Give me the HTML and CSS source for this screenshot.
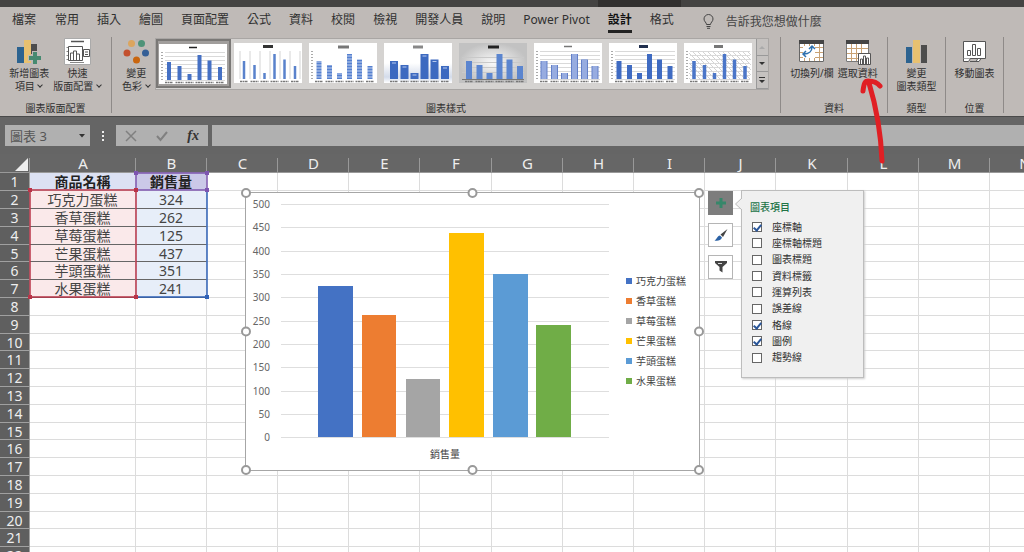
FILE: index.html
```html
<!DOCTYPE html>
<html lang="zh-Hant">
<head>
<meta charset="utf-8">
<title>圖表 3</title>
<link rel="stylesheet" href="styles.css">
</head>
<body>
<svg class="defs" aria-hidden="true">
  <defs>
    <linearGradient id="fade" x1="0" y1="0" x2="0" y2="1"><stop offset="0.5" stop-color="#fff"/><stop offset="0.85" stop-color="#d3dbea"/><stop offset="1" stop-color="#fff"/></linearGradient>
    <radialGradient id="vignette"><stop offset="0" stop-color="#fafafa"/><stop offset="1" stop-color="#c2c2c2"/></radialGradient>
    <pattern id="hatch" width="5" height="5" patternUnits="userSpaceOnUse"><path d="M0 0L5 5" stroke="#d4d4d4"/></pattern>
    <symbol id="bars" viewBox="0 0 68 40"><path fill="none" d="M10 18V36M20.500 22V36M30.500 30V36M40.500 11V36M50.500 16.500V36M61 23V36"/></symbol>
    <symbol id="grid" viewBox="0 0 68 40"><path d="M6 8.500H66M6 12.500H66M6 16.500H66M6 20.500H66M6 24.500H66M6 28.500H66M6 32.500H66M6 36.500H66" stroke="#d9d9d9"/><path d="M3 8V37" stroke="#aaa" stroke-width="2" stroke-dasharray="1 2"/></symbol>
    <symbol id="labels" viewBox="0 0 68 40"><path d="M6 38.500h8M16.500 38.500h8M26.500 38.500h8M36.500 38.500h8M46.500 38.500h8M57 38.500h8" stroke="#777" stroke-width="1.500" stroke-dasharray="2 .5"/></symbol>
  </defs>
</svg>

<header class="titlebar"><div class="tool-tab"></div></header>

<nav class="tabs">
  <button class="tab">檔案</button><button class="tab">常用</button><button class="tab">插入</button><button class="tab">繪圖</button><button class="tab">頁面配置</button><button class="tab">公式</button><button class="tab">資料</button><button class="tab">校閱</button><button class="tab">檢視</button><button class="tab">開發人員</button><button class="tab">說明</button><button class="tab">Power Pivot</button><button class="tab active">設計</button><button class="tab">格式</button>
  <button class="tell-me">
    <svg width="11" height="15" viewBox="0 0 11 15" fill="none" stroke="#444"><path d="M3.500 10.500C3.500 8.500 1 7.500 1 5A4.500 4.500 0 0 1 10 5C10 7.500 7.500 8.500 7.500 10.500ZM3.500 12.500H7.500M4 14.300H7"/></svg>
    告訴我您想做什麼
  </button>
</nav>

<section class="ribbon">
  <div class="group layouts">
    <div class="tools">
      <button class="tool">
        <svg width="26" height="27" viewBox="0 0 26 27"><path fill="#2c6390" d="M1 9h7v16H1z"/><path fill="#4d4d4d" d="M15 6h6v10h-6z"/><path fill="#e8c170" d="M8 2h7v23H8z"/><path fill="#bfbab7" d="M16 13h6v4h4v6h-4v4h-6v-4h-4v-6h4z"/><path fill="#468a70" d="M17 14h4v4h4v4h-4v4h-4v-4h-4v-4h4z"/></svg>
        <span>新增圖表<br>項目 <i class="chev"></i></span>
      </button>
      <button class="tool">
        <svg width="27" height="27" viewBox="0 0 27 27"><path fill="#fff" stroke="#aaa" d="M.5.500h26v26H.5z"/><path stroke="#555" stroke-width="1.500" d="M7 3.500h13"/><path stroke="#888" d="M2.500 9.500h2M2.500 13.500h2M2.500 17.500h2M2.500 21.500h2M6 24.500h14"/><path fill="none" stroke="#555" d="M4.500 8.500h14v14h-14zM19.500 11.500h6v7h-6zM21 14h3M21 16.500h3M6.500 22v-7h3v7M9.500 22v-9h3v9M12.500 22v-6h3v6"/></svg>
        <span>快速<br>版面配置 <i class="chev"></i></span>
      </button>
    </div>
    <h2>圖表版面配置</h2>
  </div>

  <div class="group styles">
    <div class="tools">
      <button class="tool">
        <svg width="27" height="27" viewBox="0 0 27 27"><circle cx="8.500" cy="5.500" r="3.500" fill="#dca55e"/><circle cx="18.500" cy="5.500" r="3.500" fill="#4e9379"/><circle cx="4" cy="15" r="3.500" fill="#c3502e"/><circle cx="22.500" cy="15" r="3.500" fill="#355f96"/><circle cx="13.500" cy="22" r="3.500" fill="#c9660f"/></svg>
        <span>變更<br>色彩 <i class="chev"></i></span>
      </button>
      <div class="gallery">
        <button class="thumb selected" aria-label="樣式 1"><svg viewBox="0 0 68 40"><use href="#grid"/><path d="M30 3.500h8" stroke="#222" stroke-width="1.500"/><use href="#bars" stroke="#4570c4" stroke-width="4"/><use href="#labels"/></svg></button>
        <button class="thumb" aria-label="樣式 2"><svg viewBox="0 0 68 40"><path d="M6 8v28M16 8v28M26 8v28M36 8v28M46 8v28M56 8v28M66 8v28" stroke="#d4d4d4"/><path d="M29 3.500h10" stroke="#333" stroke-width="3"/><use href="#bars" stroke="#5a82cc" stroke-width="2.500"/><use href="#labels"/></svg></button>
        <button class="thumb" aria-label="樣式 3"><svg viewBox="0 0 68 40"><path d="M3 8V37" stroke="#aaa" stroke-width="2" stroke-dasharray="1 2"/><path d="M29 4h11" stroke="#777" stroke-width="3"/><use href="#bars" stroke="#5580d0" stroke-width="5"/><path d="M6 13h60M6 16h60M6 19h60M6 22h60M6 25h60M6 28h60M6 31h60M6 34h60" stroke="#fff" stroke-opacity=".65"/><use href="#labels"/></svg></button>
        <button class="thumb" aria-label="樣式 4"><svg viewBox="0 0 68 40"><path fill="url(#fade)" d="M0 0h68v40H0z"/><path d="M29 4h10" stroke="#888" stroke-width="3"/><use href="#bars" stroke="#3c69c0" stroke-width="8"/><path d="M8 20h4M18.500 24h4M28.500 32h4M38.500 13h4M48.500 18.500h4M59 25h4" stroke="#b4c8ee"/><use href="#labels"/></svg></button>
        <button class="thumb" aria-label="樣式 5"><svg viewBox="0 0 68 40"><path fill="url(#vignette)" d="M0 0h68v40H0z"/><path d="M3 14.500h62M3 19.500h62M3 24.500h62M3 29.500h62" stroke="#c9c9c9"/><path d="M29 4h11" stroke="#222" stroke-width="3"/><use href="#bars" stroke="#5b85cf" stroke-width="6"/><path d="M3 36.500h62" stroke="#777"/><use href="#labels"/></svg></button>
        <button class="thumb" aria-label="樣式 6"><svg viewBox="0 0 68 40"><use href="#grid"/><path d="M30 3.500h8" stroke="#777" stroke-width="1.500"/><use href="#bars" stroke="#6380c8" stroke-width="7"/><use href="#bars" stroke="#97ace0" stroke-width="5"/><use href="#labels"/></svg></button>
        <button class="thumb" aria-label="樣式 7"><svg viewBox="0 0 68 40"><use href="#grid"/><path d="M30 3.500h9" stroke="#22304e" stroke-width="3"/><use href="#bars" stroke="#3f6bc2" stroke-width="5"/><use href="#labels"/></svg></button>
        <button class="thumb" aria-label="樣式 8"><svg viewBox="0 0 68 40"><path fill="url(#hatch)" d="M5 8h62v28H5z"/><use href="#grid"/><path d="M30 3.500h9" stroke="#777" stroke-width="3"/><use href="#bars" stroke="#4b76c8" stroke-width="3.500"/><use href="#labels"/></svg></button>
        <div class="spin">
          <button aria-label="上一列"><svg width="6" height="4"><path fill="#aaa" d="M0 4L3 1L6 4z"/></svg></button>
          <button aria-label="下一列"><svg width="6" height="4"><path fill="#333" d="M0 0H6L3 3z"/></svg></button>
          <button aria-label="其他"><svg width="6" height="7"><path fill="#333" d="M0 0H6V1H0zM0 3H6L3 6z"/></svg></button>
        </div>
      </div>
    </div>
    <h2>圖表樣式</h2>
  </div>

  <div class="group data">
    <div class="tools">
      <button class="tool">
        <svg width="27" height="27" viewBox="0 0 27 27"><path fill="#fff" d="M1 2h25v22H1z"/><path stroke="#c9a274" d="M1 9.500h25M1 14.500h25M1 19.500h25M6.500 6v17M11.500 6v17M16.500 6v17M21.500 6v17"/><path fill="none" stroke="#666" d="M1.500 2.500h24v21h-24z"/><path fill="#444" d="M1 2h25v4H1z"/><path fill="#fff" d="M5 8h12v12H5z"/><path fill="none" stroke="#2f71ae" stroke-width="1.500" d="M6 16C11 16 14 13 14 9M11 11l3-3 3 3M8 13l-3 3 3 3"/></svg>
        <span>切換列/欄</span>
      </button>
      <button class="tool">
        <svg width="27" height="27" viewBox="0 0 27 27"><path fill="#fff" d="M2 2h23v22H2z"/><path stroke="#c9a274" d="M2 10.500h23M2 15.500h23M2 20.500h23M7.500 6v18M12.500 6v18M17.500 6v18"/><path fill="none" stroke="#777" d="M2.500 2.500h22v21h-22z"/><path fill="#444" d="M2 2h23v4H2z"/><path fill="#fff" stroke="#555" d="M14.500 15.500h12v11h-12zM16.500 26v-5h2v5M19.500 26v-8h2v8M22.500 26v-6h2v6"/></svg>
        <span>選取資料</span>
      </button>
    </div>
    <h2>資料</h2>
  </div>

  <div class="group kind">
    <div class="tools">
      <button class="tool">
        <svg width="27" height="27" viewBox="0 0 27 27"><path fill="#2c6390" d="M3 9h6v16H3z"/><path fill="#e8c170" d="M10 2h7v23h-7z"/><path fill="#4d4d4d" d="M18 7h6v18h-6z"/></svg>
        <span>變更<br>圖表類型</span>
      </button>
    </div>
    <h2>類型</h2>
  </div>

  <div class="group place">
    <div class="tools">
      <button class="tool">
        <svg width="27" height="27" viewBox="0 0 27 27"><path fill="#fff" stroke="#555" d="M2.500 3.500h22v17h-22z"/><path fill="#fff" stroke="#555" d="M6.500 17.500v-5h3v5zM11.500 17.500v-11h3v11zM16.500 17.500v-7h3v7z"/><path fill="#fff" stroke="#555" d="M2.500 20.500v3h5l2-3M9 23.500h6l2-3h3l-2 3h-4"/></svg>
        <span>移動圖表</span>
      </button>
    </div>
    <h2>位置</h2>
  </div>
</section>

<section class="formula">
  <div class="name-box"><input aria-label="名稱方塊" value="圖表 3"><button aria-label="名稱清單"><svg width="6" height="4"><path fill="#333" d="M0 0H6L3 3.500z"/></svg></button></div>
  <svg class="dots" width="4" height="14" fill="#eee"><path d="M1 2h2v2H1zM1 6h2v2H1zM1 10h2v2H1z"/></svg>
  <div class="fx-box">
    <button aria-label="取消"><svg width="12" height="12" fill="none" stroke="#808080" stroke-width="1.500"><path d="M1 1L11 11M11 1L1 11"/></svg></button>
    <button aria-label="輸入"><svg width="12" height="12" fill="none" stroke="#808080" stroke-width="2"><path d="M1 6L4.500 10L11 2"/></svg></button>
    <button class="fx" aria-label="插入函數">fx</button>
  </div>
  <input class="formula-input" aria-label="資料編輯列">
</section>

<main class="sheet">
  <table>
    <colgroup><col class="c-num"><col class="c-a"><col><col><col><col><col class="c-wide"><col><col><col><col><col class="c-wide"><col><col><col></colgroup>
    <thead><tr><th class="corner"><svg width="13" height="13"><path fill="#eee" d="M13 0V13H0z"/></svg></th><th>A</th><th>B</th><th>C</th><th>D</th><th>E</th><th>F</th><th>G</th><th>H</th><th>I</th><th>J</th><th>K</th><th>L</th><th>M</th><th>N</th></tr></thead>
    <tbody id="rows"></tbody>
  </table>

  <svg class="ranges" width="182" height="130" aria-hidden="true">
    <path fill="none" stroke="#7d55b0" stroke-width="1.500" d="M108 2H179V19H108z"/>
    <path fill="none" stroke="#2f62b8" stroke-width="1.500" d="M108 126H179V19"/>
    <path fill="none" stroke="#b93448" stroke-width="1.500" d="M2 19H108V126H2z"/>
    <path fill="#7d55b0" d="M106 0h4v4h-4zM177 0h4v4h-4zM177 17h4v4h-4z"/>
    <path fill="#b93448" d="M0 17h4v4H0zM106 17h4v4h-4zM0 124h4v4H0zM106 124h4v4h-4z"/>
    <path fill="#2f62b8" d="M177 124h4v4h-4z"/>
  </svg>

  <section class="chart">
    <svg class="plot" width="370" height="277" viewBox="0 0 370 277">
      <path stroke="#dedede" d="M35 11.500H363M35 34.500H363M35 58.500H363M35 81.500H363M35 104.500H363M35 128.500H363M35 151.500H363M35 174.500H363M35 198.500H363M35 221.500H363M35 244.500H363"/>
      <g class="axis"><text x="24" y="15">500</text><text x="24" y="38">450</text><text x="24" y="62">400</text><text x="24" y="85">350</text><text x="24" y="108">300</text><text x="24" y="132">250</text><text x="24" y="155">200</text><text x="24" y="178">150</text><text x="24" y="202">100</text><text x="24" y="225">50</text><text x="24" y="248">0</text></g>
      <path fill="#4472c4" d="M72 93h35v151H72z"/>
      <path fill="#ed7d31" d="M116 122h34v122h-34z"/>
      <path fill="#a5a5a5" d="M160 186h34v58h-34z"/>
      <path fill="#ffc000" d="M203 40h35v204h-35z"/>
      <path fill="#5b9bd5" d="M247 81h35v163h-35z"/>
      <path fill="#70ad47" d="M290 132h35v112h-35z"/>
      <text class="category" x="199" y="265">銷售量</text>
    </svg>
    <ul class="legend">
      <li class="s1">巧克力蛋糕</li><li class="s2">香草蛋糕</li><li class="s3">草莓蛋糕</li><li class="s4">芒果蛋糕</li><li class="s5">芋頭蛋糕</li><li class="s6">水果蛋糕</li>
    </ul>
    <svg class="handles" aria-hidden="true"><circle r="4"/><circle r="4" cx="50%"/><circle r="4" cx="100%"/><circle r="4" cy="50%"/><circle r="4" cx="100%" cy="50%"/><circle r="4" cy="100%"/><circle r="4" cx="50%" cy="100%"/><circle r="4" cx="100%" cy="100%"/></svg>
  </section>

  <div class="chart-tools">
    <div class="side">
      <button class="on" aria-label="圖表項目"><svg width="12" height="12"><path fill="#36876a" d="M4.500 1h3v3.500H11v3H7.500V11h-3V7.500H1v-3h3.500z"/></svg></button>
      <button aria-label="圖表樣式"><svg width="14" height="14"><path fill="#444" d="M13.500 1L9 9L6.500 6.500z"/><path fill="#2b62a5" d="M6 7.500L8 9.500C7 13 3 13 .5 12.500C3 11.500 3 8 6 7.500z"/></svg></button>
      <button aria-label="圖表篩選"><svg width="14" height="14"><path fill="#444" d="M1 1H13V3L8.500 7V12.500L5.500 10.500V7L1 3z"/><path stroke="#ddd" d="M4 3.500h4"/></svg></button>
    </div>
    <section class="pane">
      <svg class="pointer" width="8" height="14"><path fill="#f0f0f0" stroke="#bbb" d="M8 1L1.500 7L8 13"/></svg>
      <h3>圖表項目</h3>
      <label><input type="checkbox" checked>座標軸</label>
      <label><input type="checkbox">座標軸標題</label>
      <label><input type="checkbox">圖表標題</label>
      <label><input type="checkbox">資料標籤</label>
      <label><input type="checkbox">運算列表</label>
      <label><input type="checkbox">誤差線</label>
      <label><input type="checkbox" checked>格線</label>
      <label><input type="checkbox" checked>圖例</label>
      <label><input type="checkbox">趨勢線</label>
    </section>
  </div>
</main>

<svg class="arrow" width="32" height="90" fill="none" stroke="#e01f24" stroke-width="5" stroke-linecap="round" stroke-linejoin="round" aria-hidden="true"><path d="M26 85C25 60 20 30 13 7M7 15C8 7 9 5 12 5C18 5 21 6 24 10"/></svg>

<script src="sheet.js"></script>
</body>
</html>
```

FILE: styles.css
```css
* { box-sizing: border-box; }
body {
  margin: 0;
  height: 100vh;
  overflow: hidden;
  display: flex;
  flex-direction: column;
  position: relative;
  background: #666;
  color: #303030;
  font: 10px/13px "Noto Sans", "Noto Sans CJK TC", sans-serif;
}
button, input { font: inherit; color: inherit; border: 0; padding: 0; margin: 0; background: none; }
h2, h3, ul { margin: 0; padding: 0; font-weight: normal; font-size: 10px; list-style: none; }
svg { display: block; flex: none; }
.defs { position: absolute; width: 0; height: 0; }

.titlebar { height: 7px; background: #444342; display: flex; }
.tool-tab { width: 83px; margin-left: 598px; background: #32302f; }

.tabs { display: flex; gap: 18px; height: 30px; padding: 1px 12px 0; background: #bfbab7; font-size: 12px; white-space: nowrap; }
.tab { height: 25px; flex: none; padding-top: 2px; border-bottom: 3px solid transparent; line-height: 20px; }
.tab:first-child { margin-right: 1px; }
.tab.active { font-weight: bold; color: #111; border-color: #222; }
.tell-me { display: flex; align-items: center; gap: 12px; height: 26px; margin-left: 11px; color: #444; }

.ribbon { display: flex; height: 80px; padding-bottom: 3px; background: #bfbab7; border-bottom: 1px solid #4a4a4a; }
.group { display: flex; flex-direction: column; justify-content: space-between; border-right: 1px solid #8e8a88; text-align: center; white-space: nowrap; }
.group h2 { line-height: 10px; }
.tools { display: flex; justify-content: center; gap: 4px; }
.tool { display: flex; flex-direction: column; align-items: center; gap: 2px; margin-top: 1px; line-height: 13px; }
.chev { display: inline-block; width: 4px; height: 4px; margin: 0 1px 3px; border: solid #333; border-width: 0 1px 1px 0; transform: rotate(45deg); }
.layouts { width: 112px; }
.styles { width: 669px; }
.data { width: 107px; }
.kind { width: 58px; }
.place { width: 58px; }
.styles .tools { justify-content: flex-start; padding-left: 10px; }

.gallery { display: flex; height: 52px; margin-top: 1px; background: #d5d3d1; border: 1px solid #a9a6a4; }
.thumb { width: 75px; padding: 4px 3px 6px; }
.thumb svg { width: 68px; height: 40px; background: #fff; }
.thumb.selected { border: 2px solid #7a7876; padding: 2px 1px; height: 49px; background: #a19e9c; }
.thumb.selected svg { margin: auto; }
.spin { display: flex; flex-direction: column; width: 12px; }
.spin button { flex: 1; display: grid; place-items: center; border: solid #999; border-width: 0 0 1px 1px; background: #c5c2c0; }

.formula { display: flex; align-items: center; gap: 4px; height: 37px; padding: 0 0 0 5px; background: #656565; }
.name-box { display: flex; align-items: center; width: 85px; height: 21px; padding: 0 5px; background: #b0b0b0; color: #555; font-size: 13px; }
.name-box input { flex: 1; min-width: 0; }
.dots { margin: 0 7px; }
.fx-box { display: flex; align-items: center; justify-content: space-between; width: 92px; height: 21px; padding: 0 9px; background: #b0b0b0; }
.fx { font: italic bold 14px/18px "Liberation Serif", serif; color: #333; }
.formula-input { flex: 1; height: 21px; background: #b0b0b0; }

.sheet { flex: 1; min-height: 0; position: relative; overflow: hidden; background: #fff; }
.sheet table { width: 100%; min-width: 1060px; table-layout: fixed; border-collapse: separate; border-spacing: 0; font-size: 14px; line-height: 16px; text-align: center; }
col { width: 71px; }
.c-num { width: 30px; }
.c-a { width: 106px; }
.c-wide { width: 72px; }
col:last-child { width: auto; }
th, td { padding: 0; white-space: nowrap; overflow: hidden; }
thead th { height: 19px; background: linear-gradient(#999, #999) right bottom / 1px 14px no-repeat #666; color: #eee; font-weight: normal; font-size: 15px; line-height: 18px; border-bottom: 1px solid #999; }
thead .corner { padding: 3px 0 0 15px; }
tbody th { background: #5f5f5f; color: #eee; font-weight: normal; border-bottom: 1px solid #a0a0a0; border-right: 1px solid #a0a0a0; }
tbody td { border-right: 1px solid #dcdcdc; border-bottom: 1px solid #dcdcdc; color: #444; }
tbody tr { height: 18px; }
tbody tr:nth-child(5n) { height: 17px; }
tbody tr:nth-child(5n) > * { line-height: 15px; }
td.head-a { background: #dce1f3; font-weight: bold; color: #222; }
td.head-b { background: #cbc9e8; font-weight: bold; color: #222; }
td.name { background: #fae9ea; border-bottom-color: #666; }
td.value { background: #e7eef9; border-bottom-color: #666; }

.ranges { position: absolute; left: 28px; top: 17px; }

.chart { position: absolute; left: 245px; top: 38px; width: 455px; height: 279px; display: flex; align-items: center; background: #fff; border: 1px solid #a6a6a6; }
.plot text { fill: #666; font-size: 10px; }
.axis { text-anchor: end; }
.plot .category { text-anchor: middle; fill: #444; }
.legend { margin-left: 10px; padding-bottom: 2px; line-height: 20px; color: #444; }
.legend li { display: flex; align-items: center; gap: 4px; height: 20px; white-space: nowrap; }
.legend li::before { content: ""; width: 6px; height: 6px; }
.s1::before { background: #4472c4; }
.s2::before { background: #ed7d31; }
.s3::before { background: #a5a5a5; }
.s4::before { background: #ffc000; }
.s5::before { background: #5b9bd5; }
.s6::before { background: #70ad47; }
.handles { position: absolute; inset: 0; width: 100%; height: 100%; overflow: visible; fill: #fff; stroke: #999; stroke-width: 2px; }

.chart-tools { position: absolute; left: 708px; top: 36px; display: flex; align-items: flex-start; gap: 8px; }
.side { display: flex; flex-direction: column; gap: 8px; padding-top: 1px; }
.side button { display: grid; place-items: center; width: 25px; height: 24px; background: #fff; border: 1px solid #b5b5b5; }
.side .on { background: #7d7d7d; border-color: #7d7d7d; }
.pane { position: relative; width: 123px; padding: 9px 11px 11px 10px; background: #f0f0f0; border: 1px solid #bdbdbd; box-shadow: 1px 1px 2px #ccc; }
.pane h3 { color: #217346; font-weight: 500; line-height: 15px; margin: 0 -2px 4px; }
.pane label { display: flex; align-items: center; gap: 10px; height: 16px; }
.pane label:nth-of-type(3n) { height: 17px; }
.pane input { appearance: none; position: relative; width: 10px; height: 10px; border: 1px solid #666; background: #fff; }
.pane input:checked::after { content: ""; position: absolute; left: 2px; top: 0; width: 3px; height: 6px; border: solid #2a5699; border-width: 0 2px 2px 0; transform: rotate(40deg); }
.pointer { position: absolute; left: -8px; top: 6px; }

.arrow { position: absolute; left: 856px; top: 76px; }
```

FILE: sheet.js
```js
const data = [
  ["商品名稱", "銷售量"],
  ["巧克力蛋糕", 324],
  ["香草蛋糕", 262],
  ["草莓蛋糕", 125],
  ["芒果蛋糕", 437],
  ["芋頭蛋糕", 351],
  ["水果蛋糕", 241],
];
const body = document.getElementById("rows");
for (let r = 0; r < 22; r++) {
  const row = body.insertRow();
  const num = document.createElement("th");
  num.textContent = r + 1;
  row.append(num);
  for (let c = 0; c < 14; c++) {
    const cell = row.insertCell();
    if (data[r] && c < 2) {
      cell.textContent = data[r][c];
      cell.className = r === 0 ? ["head-a", "head-b"][c] : ["name", "value"][c];
    }
  }
}
```
